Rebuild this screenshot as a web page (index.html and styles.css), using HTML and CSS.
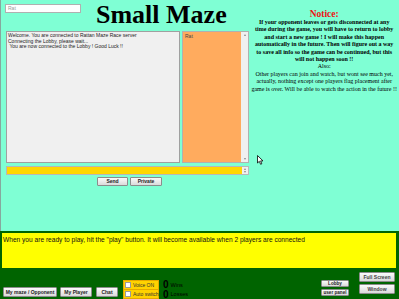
FILE: index.html
```html
<!DOCTYPE html>
<html lang="en">
<head>
  <meta charset="UTF-8" />
  <title>Small Maze</title>
  <link rel="stylesheet" href="styles.css">
</head>
<body>
  <div class="page">
    <div class="top">
      <div class="main">
        <div class="head">
          <div class="name">Rat</div>
          <h1>Small Maze</h1>
        </div>
        <div class="chat-row">
          <div class="chat">
            Welcome. You are connected to Rattan Maze Race server<br>
            Connecting the Lobby, please wait...<br>
            &nbsp;You are now connected to the Lobby ! Good Luck !!
          </div>
          <div class="list">
            <div class="list-text">Rat</div>
            <div class="scroll"><span class="up"></span><span class="down"></span></div>
          </div>
        </div>
        <div class="msg">
          <div class="scroll small"><span class="up"></span><span class="down"></span></div>
        </div>
        <div class="send-row">
          <button class="btn send">Send</button>
          <button class="btn private">Private</button>
        </div>
      </div>
      <div class="notice">
        <h2>Notice:</h2>
        <p class="warn">If your opponent leaves or gets disconnected at any<br>
        time during the game, you will have to return to lobby<br>
        and start a new game ! I will make this happen<br>
        automatically in the future. Then will figure out a way<br>
        to save all info so the game can be continued, but this<br>
        will not happen soon !!</p>
        <p class="also">Also:<br>
        Other players can join and watch, but wont see much yet,<br>
        actually, nothing except one players flag placement after<br>
        game is over. Will be able to watch the action in the future !!</p>
      </div>
    </div>

    <div class="bottom">
      <div class="status">When you are ready to play, hit the "play" button. It will become available when 2 players are connected</div>
      <div class="controls">
        <button class="btn wide">My maze / Opponent</button>
        <button class="btn player">My Player</button>
        <button class="btn chat-btn">Chat</button>
        <div class="voice">
          <label class="opt"><span class="box"></span>Voice ON</label>
          <label class="opt"><span class="box"></span>Auto switch</label>
        </div>
        <div class="score">
          <div class="score-row"><b>0</b>Wins</div>
          <div class="score-row"><b>0</b>Losses</div>
        </div>
        <div class="lobby">
          <button class="btn mini">Lobby</button>
          <button class="btn mini">user panel</button>
        </div>
        <div class="screen">
          <button class="btn big">Full Screen</button>
          <button class="btn big">Window</button>
        </div>
      </div>
    </div>

    <svg class="cursor" width="7" height="10" viewBox="0 0 7 10">
      <path d="M0.5 0.5 L0.5 8 L2.3 6.3 L3.6 9.3 L4.8 8.8 L3.6 5.9 L6 5.9 Z" fill="#fff" stroke="#000" stroke-width="0.8"/>
    </svg>
  </div>
</body>
</html>
```

FILE: styles.css
```css
body {
  margin: 0;
  font-family: "Liberation Sans", Arial, sans-serif;
  background: #7fffd4;
}

.page {
  position: relative;
  width: 399px;
  height: 299px;
  display: flex;
  flex-direction: column;
  overflow: hidden;
}

.top {
  display: flex;
  height: 231px;
  border-left: 1px solid #86a89e;
  box-sizing: border-box;
}

.main {
  width: 244px;
  padding-left: 5px;
}

.head {
  display: flex;
  align-items: flex-start;
  height: 31px;
}

.name {
  width: 76px;
  height: 9px;
  margin: 4px 0 0 -1px;
  padding: 0 2px;
  box-sizing: border-box;
  border: 1px solid #b0b0b0;
  background: #fff;
  color: #999;
  font-size: 5px;
  line-height: 7px;
}

h1 {
  margin: 0 0 0 15px;
  font: bold 26px/29px "Liberation Serif", "Times New Roman", serif;
  white-space: nowrap;
  color: #000;
}

.chat-row {
  display: flex;
  gap: 2px;
  height: 132px;
}

.chat {
  width: 174px;
  padding: 1px 1px;
  box-sizing: border-box;
  background: #f0f0f0;
  border: 1px solid #a0a0a0;
  color: #222;
  font-size: 5px;
  line-height: 5.6px;
  white-space: nowrap;
}

.list {
  flex: 1;
  display: flex;
  background: #ffab5e;
  border: 1px solid #b0b0b0;
}

.list-text {
  flex: 1;
  padding: 1px 2px;
  color: #444;
  font-size: 5px;
  line-height: 6px;
}

.scroll {
  width: 7px;
  padding: 2px 0;
  box-sizing: border-box;
  background: #f0f0f0;
  display: flex;
  flex-direction: column;
  justify-content: space-between;
  align-items: center;
}

.scroll.small {
  width: 6px;
  padding: 1px 0;
}

.up,
.down {
  width: 0;
  height: 0;
  border-left: 1.5px solid transparent;
  border-right: 1.5px solid transparent;
}

.up {
  border-bottom: 2px solid #888;
}

.down {
  border-top: 2px solid #888;
}

.msg {
  margin-top: 3px;
  height: 9px;
  display: flex;
  justify-content: flex-end;
  background: #ffd700;
  border: 1px solid #b8b8b8;
  box-sizing: border-box;
}

.send-row {
  display: flex;
  gap: 2px;
  margin: 2px 0 0 91px;
}

.btn {
  height: 9px;
  padding: 0;
  background: linear-gradient(#fbfbfb, #dadada);
  border: 1px solid #8c8c8c;
  border-radius: 1px;
  color: #222;
  font: bold 5px/7px "Liberation Sans", Arial, sans-serif;
  white-space: nowrap;
}

.send { width: 31px; }
.private { width: 32px; }

.notice {
  width: 150px;
  text-align: center;
  font-family: "Liberation Serif", "Times New Roman", serif;
  white-space: nowrap;
}

.notice h2 {
  margin: 9px 0 0;
  color: #ee1111;
  font-size: 9.5px;
  line-height: 10px;
}

.notice p {
  margin: 0;
  font-size: 6px;
  line-height: 7.4px;
}

.warn {
  font-weight: bold;
}

.bottom {
  flex: 1;
  display: flex;
  flex-direction: column;
  background: #006400;
  padding: 2px 3px 0 2px;
}

.status {
  height: 35px;
  padding: 3px 1px;
  box-sizing: border-box;
  background: #ffff00;
  color: #111;
  font-size: 6.6px;
  line-height: 7px;
  white-space: nowrap;
}

.controls {
  flex: 1;
  display: flex;
  align-items: flex-end;
}

.wide,
.player,
.chat-btn {
  height: 10px;
  margin-bottom: 2px;
}

.wide { width: 54px; margin-left: 1px; }
.player { width: 32px; margin-left: 3px; }
.chat-btn { width: 22px; margin-left: 4px; }

.voice {
  width: 36px;
  margin-left: 5px;
  display: flex;
  flex-direction: column;
}

.opt {
  height: 10px;
  display: flex;
  align-items: center;
  gap: 2px;
  padding-left: 1px;
  box-sizing: border-box;
  background: #ffd200;
  border: 1px solid #e6a800;
  color: #333;
  font-size: 5px;
  white-space: nowrap;
}

.opt + .opt {
  margin-top: -1px;
}

.box {
  flex: none;
  width: 4px;
  height: 4px;
  background: #fff;
  border: 1px solid #999;
}

.score {
  margin-left: 4px;
  display: flex;
  flex-direction: column;
}

.score-row {
  height: 9.5px;
  display: flex;
  align-items: center;
  gap: 2px;
  color: #000;
  font-size: 5.5px;
}

.score-row b {
  font-size: 10px;
  line-height: 9px;
}

.lobby {
  margin: 0 0 3px auto;
  display: flex;
  flex-direction: column;
  gap: 2px;
}

.mini {
  width: 28px;
  height: 7px;
  font-size: 4.6px;
  line-height: 5px;
}

.screen {
  margin: 0 1px 5px 10px;
  display: flex;
  flex-direction: column;
  gap: 2px;
}

.big {
  width: 36px;
  height: 10px;
  color: #444;
}

.cursor {
  position: absolute;
  left: 257px;
  top: 155px;
}
```
